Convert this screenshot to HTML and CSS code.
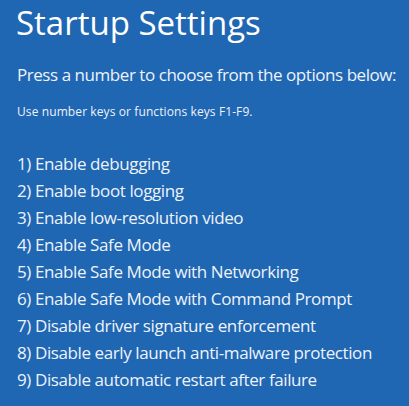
FILE: index.html
```html
<!DOCTYPE html>
<html lang="en">
<head>
    <meta charset="UTF-8">
    <meta name="viewport" content="width=device-width, initial-scale=1.0">
    <title>Startup Settings</title>
    <link rel="stylesheet" href="styles.css">
</head>
<body>
    <div class="screen">
        <h1 class="title">Startup Settings</h1>
        <p class="prompt">Press a number to choose from the options below:</p>
        <p class="hint">Use number keys or functions keys F1-F9.</p>

        <!-- Boot options -->
        <ul class="options">
            <li>1) Enable debugging</li>
            <li>2) Enable boot logging</li>
            <li>3) Enable low-resolution video</li>
            <li>4) Enable Safe Mode</li>
            <li>5) Enable Safe Mode with Networking</li>
            <li>6) Enable Safe Mode with Command Prompt</li>
            <li>7) Disable driver signature enforcement</li>
            <li>8) Disable early launch anti-malware protection</li>
            <li>9) Disable automatic restart after failure</li>
        </ul>
    </div>
</body>
</html>
```

FILE: styles.css
```css
* {
    margin: 0;
    padding: 0;
    box-sizing: border-box;
}

body {
    font-family: 'Open Sans', 'Noto Sans', sans-serif;
    background: #1f66b3;
    color: #eef3fa;
    width: 409px;
    height: 406px;
    overflow: hidden;
}

.screen {
    padding: 0 0 0 16px;
}

.title {
    font-size: 33px;
    font-weight: normal;
    line-height: 40px;
    margin-top: 3px;
    color: #ffffff;
}

.prompt {
    font-size: 17px;
    line-height: 22px;
    margin-top: 21px;
    padding-left: 1px;
    letter-spacing: -0.45px;
    white-space: nowrap;
}

.hint {
    font-size: 12px;
    line-height: 16px;
    margin-top: 18px;
    padding-left: 1px;
    letter-spacing: 0.1px;
}

.options {
    list-style: none;
    margin-top: 30px;
    padding-left: 1px;
}

.options li {
    font-size: 17px;
    line-height: 27px;
    letter-spacing: -0.4px;
}
```
